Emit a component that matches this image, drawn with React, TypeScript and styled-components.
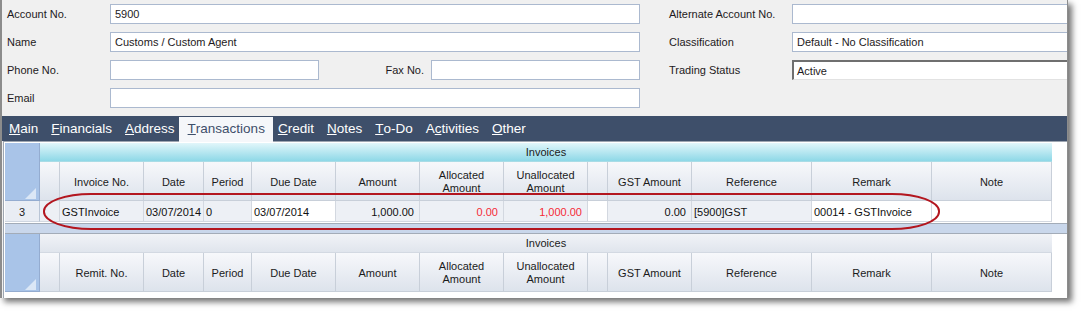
import React from 'react';
import styled, { createGlobalStyle, css } from 'styled-components';

const GlobalStyle = createGlobalStyle`
  *, *::before, *::after { box-sizing: border-box; }
  html, body { margin: 0; padding: 0; background: #fff; }
  body {
    font-family: "Liberation Sans", Arial, sans-serif;
    font-size: 11px;
    color: #1b1b1b;
  }
`;

const COLUMNS = '35px 20px 84px 60px 48px 84px 84px 84px 84px 20px 84px 120px 120px 120px';

type Col = { title: string; wrap?: boolean };

const invoiceCols: Col[] = [
  { title: '' },
  { title: 'Invoice No.' },
  { title: 'Date' },
  { title: 'Period' },
  { title: 'Due Date' },
  { title: 'Amount' },
  { title: 'Allocated Amount', wrap: true },
  { title: 'Unallocated Amount', wrap: true },
  { title: '' },
  { title: 'GST Amount' },
  { title: 'Reference' },
  { title: 'Remark' },
  { title: 'Note' },
];

const remitCols: Col[] = invoiceCols.map((c, i) => (i === 1 ? { title: 'Remit. No.' } : c));

type Cell = { text: string; white?: boolean; right?: boolean; red?: boolean };

const invoiceRow: Cell[] = [
  { text: '' },
  { text: 'GSTInvoice' },
  { text: '03/07/2014' },
  { text: '0' },
  { text: '03/07/2014', white: true },
  { text: '1,000.00', right: true },
  { text: '0.00', right: true, red: true },
  { text: '1,000.00', right: true, red: true },
  { text: '', white: true },
  { text: '0.00', right: true },
  { text: '[5900]GST' },
  { text: '00014 - GSTInvoice', white: true },
  { text: '', white: true },
];

const tabs = [
  { pre: '', key: 'M', post: 'ain' },
  { pre: '', key: 'F', post: 'inancials' },
  { pre: '', key: 'A', post: 'ddress' },
  { pre: '', key: 'T', post: 'ransactions', active: true },
  { pre: '', key: 'C', post: 'redit' },
  { pre: '', key: 'N', post: 'otes' },
  { pre: '', key: 'T', post: 'o-Do' },
  { pre: 'A', key: 'c', post: 'tivities' },
  { pre: '', key: 'O', post: 'ther' },
];

const HeaderGrid: React.FC<{ cols: Col[]; cyan?: boolean }> = ({ cols, cyan }) => (
  <>
    <Corner>
      <svg width="11" height="11" viewBox="0 0 11 11">
        <polygon points="11,0 11,11 0,11" fill="#dbe7f6" />
      </svg>
    </Corner>
    <Band $cyan={cyan}>Invoices</Band>
    {cols.map((c, i) => (
      <HeaderCell key={i}>
        {c.wrap ? (
          <span>
            {c.title.split(' ')[0]}
            <br />
            {c.title.split(' ')[1]}
          </span>
        ) : (
          c.title
        )}
      </HeaderCell>
    ))}
  </>
);

const App: React.FC = () => {
  return (
    <Page>
      <GlobalStyle />
      <Window>
        <Form>
          <LeftFields>
            <Label>Account No.</Label>
            <TextBox>5900</TextBox>
            <Label>Name</Label>
            <TextBox>Customs / Custom Agent</TextBox>
            <Label>Phone No.</Label>
            <PhoneRow>
              <TextBox />
              <Label $right>Fax No.</Label>
              <TextBox />
            </PhoneRow>
            <Label>Email</Label>
            <TextBox />
          </LeftFields>
          <RightFields>
            <Label>Alternate Account No.</Label>
            <TextBox />
            <Label>Classification</Label>
            <TextBox>Default - No Classification</TextBox>
            <Label>Trading Status</Label>
            <TextBox $sunken>Active</TextBox>
          </RightFields>
        </Form>

        <TabBar>
          {tabs.map((t, i) => (
            <Tab key={i} $active={t.active}>
              {t.pre}
              <u>{t.key}</u>
              {t.post}
            </Tab>
          ))}
        </TabBar>

        <GridArea>
          <Table>
            <HeaderGrid cols={invoiceCols} cyan />
            <RowHeader>3</RowHeader>
            {invoiceRow.map((c, i) => (
              <DataCell key={i} $white={c.white} $right={c.right} $red={c.red}>
                {c.text}
              </DataCell>
            ))}
          </Table>
          <Splitter />
          <Table>
            <HeaderGrid cols={remitCols} />
          </Table>
        </GridArea>

        <Highlight />
      </Window>
    </Page>
  );
};

const Page = styled.div`
  padding: 0 14px 14px 0;
`;

const Window = styled.div`
  position: relative;
  width: 1068px;
  height: 298px;
  border-left: 2px solid #8c8c8c;
  border-right: 1px solid #8c8c8c;
  background: #f0f0f0;
  box-shadow: 4px 4px 6px rgba(0, 0, 0, 0.55);
  overflow: hidden;
  display: flex;
  flex-direction: column;
`;

const Form = styled.div`
  height: 116px;
  flex: none;
  display: flex;
  padding: 4px 0 0 5px;
`;

const LeftFields = styled.div`
  width: 633px;
  flex: none;
  display: grid;
  grid-template-columns: 103px 530px;
  grid-auto-rows: 20px;
  row-gap: 8px;
`;

const RightFields = styled.div`
  margin-left: 29px;
  display: grid;
  grid-template-columns: 123px 300px;
  grid-auto-rows: 20px;
  row-gap: 8px;
`;

const PhoneRow = styled.div`
  display: grid;
  grid-template-columns: 209px 112px 209px;
`;

const Label = styled.div<{ $right?: boolean }>`
  display: flex;
  align-items: center;
  justify-content: ${({ $right }) => ($right ? 'flex-end' : 'flex-start')};
  padding-right: ${({ $right }) => ($right ? '7px' : '0')};
  color: #1e1a22;
  white-space: nowrap;
`;

const TextBox = styled.div<{ $sunken?: boolean }>`
  height: 20px;
  display: flex;
  align-items: center;
  padding-left: 4px;
  background: #fff;
  border: 1px solid #abb9cf;
  color: #1e1a22;
  white-space: nowrap;
  ${({ $sunken }) =>
    $sunken &&
    css`
      padding-left: 3px;
      border-width: 2px 1px 1px 2px;
      border-color: #6f6f6f #e2e2e2 #e2e2e2 #6f6f6f;
    `}
`;

const TabBar = styled.div`
  height: 25px;
  flex: none;
  display: flex;
  padding-left: 0.5px;
  background: #3e4f6a;
`;

const Tab = styled.div<{ $active?: boolean }>`
  display: flex;
  align-items: center;
  padding: 0 6.5px;
  font-size: 13.5px;
  color: #fff;
  white-space: nowrap;
  ${({ $active }) =>
    $active &&
    css`
      position: relative;
      z-index: 1;
      margin: 1px -2px -1px;
      padding: 0 8.5px 3px;
      background: #f5f7fa;
      color: #3e4f6a;
    `}
`;

const GridArea = styled.div`
  flex: 1;
  margin-left: 1px;
  padding: 1px 0 0 1px;
  background: #fff;
  border-top: 1px solid #9ea6b1;
  border-left: 1px solid #9ea6b1;
`;

const Table = styled.div`
  display: grid;
  grid-template-columns: ${COLUMNS};
  grid-template-rows: 19px 39px;
  grid-auto-rows: 21px;
`;

const Corner = styled.div`
  grid-row: 1 / span 2;
  display: flex;
  align-items: flex-end;
  justify-content: flex-end;
  padding: 0 3px 1px 0;
  background: #a9c4e8;
  border-right: 1px solid #94acd0;
  border-bottom: 1px solid #94acd0;
`;

const Band = styled.div<{ $cyan?: boolean }>`
  grid-column: 2 / -1;
  display: flex;
  align-items: center;
  justify-content: center;
  color: #1b1b1b;
  border-bottom: 1px solid ${({ $cyan }) => ($cyan ? '#a9dce6' : '#d3d9e2')};
  background: ${({ $cyan }) =>
    $cyan ? 'linear-gradient(#e1f6fa, #8ed8e7)' : 'linear-gradient(#f1f3f7, #e0e5ed)'};
`;

const HeaderCell = styled.div`
  display: flex;
  align-items: center;
  justify-content: center;
  padding-top: 2px;
  text-align: center;
  line-height: 13px;
  color: #1b1b1b;
  background: linear-gradient(#f7f8fb, #dde3ec);
  border-right: 1px solid #c8cfd9;
  border-bottom: 1px solid #c8cfd9;
`;

const RowHeader = styled.div`
  display: flex;
  align-items: center;
  justify-content: center;
  padding-top: 1px;
  background: #e9edf4;
  border-right: 1px solid #b9c5d6;
  border-bottom: 1px solid #cfd6e0;
`;

const DataCell = styled.div<{ $white?: boolean; $right?: boolean; $red?: boolean }>`
  display: flex;
  align-items: center;
  justify-content: ${({ $right }) => ($right ? 'flex-end' : 'flex-start')};
  padding: 1px ${({ $right }) => ($right ? '5px' : '0')} 0 ${({ $right }) => ($right ? '0' : '2px')};
  overflow: hidden;
  white-space: nowrap;
  color: ${({ $red }) => ($red ? '#f52a35' : '#111')};
  background: ${({ $white }) => ($white ? '#fff' : '#edf0f5')};
  border-right: 1px solid #d3d8e0;
  border-bottom: 1px solid #d3d8e0;
`;

const Splitter = styled.div`
  height: 11px;
  margin-top: 1px;
  background: #c9d7eb;
  border-top: 1px solid #a3acb8;
  border-bottom: 1px solid #a3acb8;
`;

const Highlight = styled.div`
  position: absolute;
  left: 41px;
  top: 193px;
  width: 897px;
  height: 37px;
  border: 2px solid #b3161f;
  border-radius: 48px / 18px;
  pointer-events: none;
`;

export default App;
